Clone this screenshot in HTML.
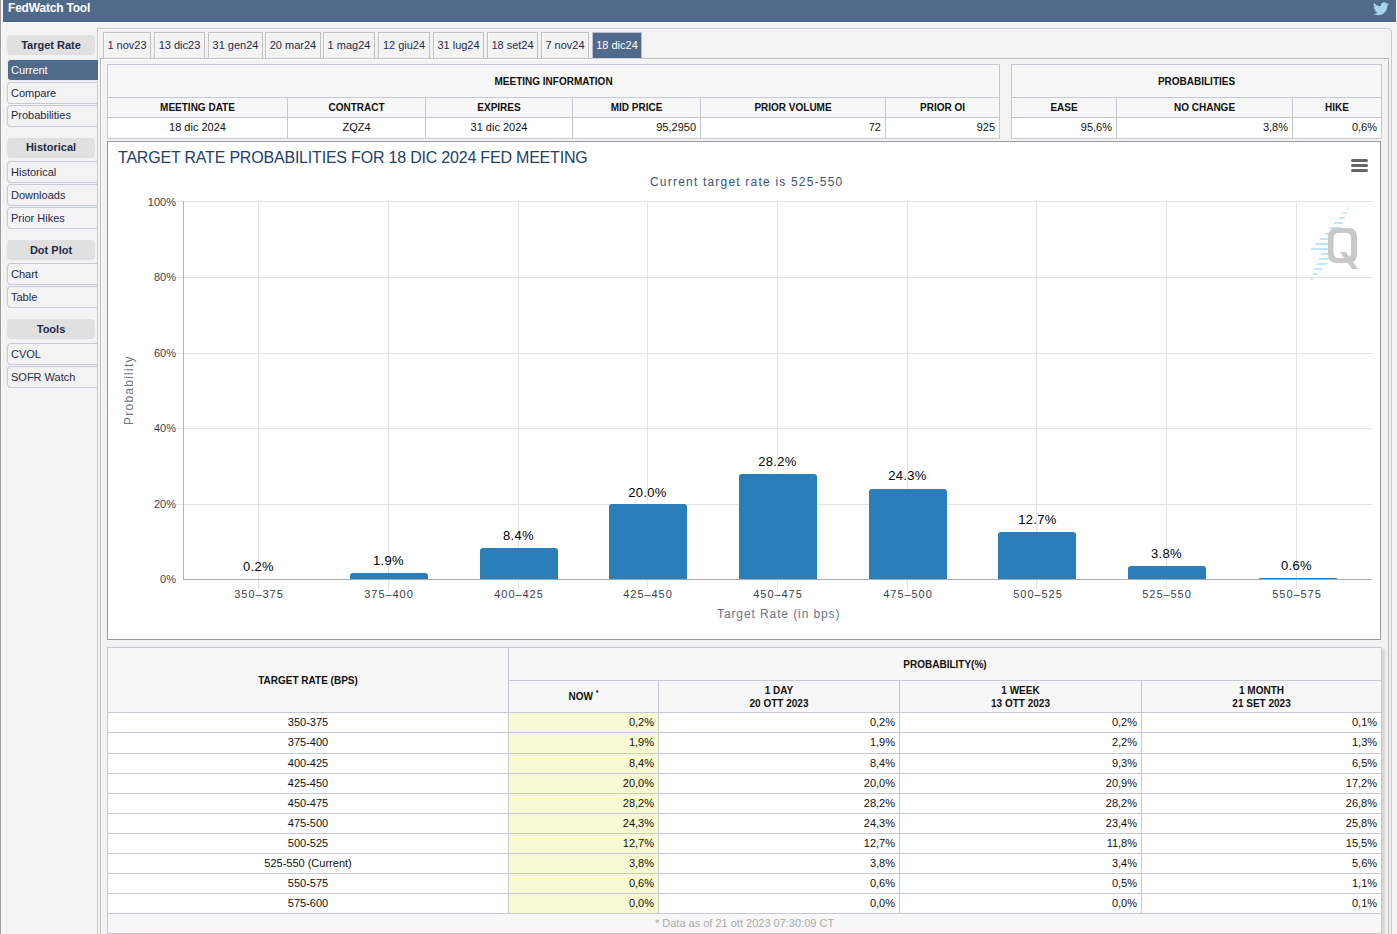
<!DOCTYPE html>
<html><head><meta charset="utf-8">
<style>
*{margin:0;padding:0;box-sizing:border-box}
html,body{width:1397px;height:934px;overflow:hidden;background:#f3f3f3;font-family:"Liberation Sans",sans-serif;color:#1f2a44}
.a{position:absolute}
#lbar{left:0;top:0;width:1px;height:934px;background:#9a9a9a}
#lbar2{left:1px;top:0;width:1px;height:934px;background:#fafafa}
#hdr{left:3px;top:0;width:1393px;height:22px;background:#4f6a8a;border-bottom:1px solid #46617f}
#hdrline{left:3px;top:22px;width:1393px;height:1px;background:#fdfdfd}
#hdr .t{position:absolute;left:5px;top:0px;font-size:12px;font-weight:bold;color:#fff;line-height:16px;letter-spacing:-0.2px}
.sh{position:absolute;left:7px;width:88px;height:20px;background:#e0e0e0;border-radius:4px;font-size:11px;font-weight:bold;text-align:center;line-height:20px;color:#1f2a4a}
.si{position:absolute;left:7px;width:91px;height:22px;background:#f3f3f3;border:1px solid #c5c9d6;border-right:none;border-radius:4px 0 0 4px;font-size:11px;line-height:20px;padding-left:3px;color:#1f2a4a}
.si.act{background:#4f6a8a;border-color:#e6e9ef;color:#fff}
#outer{left:97px;top:28px;width:1295px;height:920px;border:1px solid #c5c9d6;border-radius:1px 4px 0 0;background:#f3f3f3;box-shadow:inset 1px 1px 0 #fafafa}
#content{left:100px;top:58px;width:1289px;height:900px;border:1px solid #b9b9b9;background:#f3f3f3;box-shadow:inset 1px 1px 0 #fff}
.tab{position:absolute;top:32px;height:27px;border:1px solid #c2c2c2;background:#f3f3f3;font-size:11px;line-height:25px;text-align:center;color:#1f2a4a;box-shadow:inset 1px 1px 0 #fbfbfb}
.tab.act{background:#4f6a8a;color:#fff;border-color:#b9bfcf;border-bottom-color:#cfd3dc;box-shadow:none}
table{border-collapse:collapse;table-layout:fixed;position:absolute}
td,th{border:1px solid #c5c9d6;overflow:hidden;white-space:nowrap;color:#111}
th{background:#f7f7f7;font-size:10px;font-weight:bold;line-height:13px}
td{background:#fff;font-size:11px;vertical-align:top;line-height:13px;padding-top:3px}
.r{text-align:right;padding-right:4px}
.c{text-align:center}
#chart{left:107px;top:141px;width:1274px;height:499px;border:1px solid #9a9a9a;background:#fff}
.gl{position:absolute;background:#e3e3e3}
.bar{position:absolute;background:#2a7eb9;border-radius:3px 3px 0 0}
.dl{position:absolute;width:80px;text-align:center;font-size:13px;color:#000;letter-spacing:0.3px}
.xl{position:absolute;width:80px;text-align:center;font-size:11px;color:#3a3f4a;letter-spacing:0.95px;text-indent:1px}
.now{background:#f9f9d2}
.foot{background:#f7f7f7;color:#aaa}
sup{font-size:7px;vertical-align:top;position:relative;top:-4px}
.yl{position:absolute;width:40px;text-align:right;font-size:11px;color:#3a3f4a}
</style></head><body>
<div class="a" id="lbar"></div><div class="a" id="lbar2"></div>
<div class="a" id="hdr"><span class="t">FedWatch Tool</span>
<svg style="position:absolute;left:1370px;top:2px" width="16" height="14" viewBox="0 0 24 20"><path fill="#a8d4f2" d="M24 2.4c-.9.4-1.8.6-2.8.8 1-.6 1.8-1.6 2.2-2.7-1 .6-2 1-3.1 1.2C19.3.7 18 0 16.6 0c-2.7 0-4.9 2.2-4.9 4.9 0 .4 0 .8.1 1.1C7.7 5.8 4.1 3.9 1.7.9c-.4.7-.7 1.6-.7 2.5 0 1.7.9 3.2 2.2 4.1-.8 0-1.6-.2-2.2-.6v.1c0 2.4 1.7 4.4 3.9 4.8-.4.1-.8.2-1.3.2-.3 0-.6 0-.9-.1.6 2 2.4 3.4 4.6 3.4-1.7 1.3-3.8 2.1-6.1 2.1-.4 0-.8 0-1.2-.1 2.2 1.4 4.8 2.2 7.5 2.2 9.1 0 14-7.5 14-14v-.6c1-.7 1.8-1.6 2.5-2.5z"/></svg>
</div>
<div class="a" id="hdrline"></div>

<div class="a" id="outer"></div>
<div class="a" id="content"></div>

<!-- sidebar -->
<div class="sh" style="top:35px">Target Rate</div>
<div class="si" style="top:82px">Compare</div>
<div class="si" style="top:105px;line-height:18px">Probabilities</div>
<div class="sh" style="top:138px;line-height:18px">Historical</div>
<div class="si" style="top:161px">Historical</div>
<div class="si" style="top:184px">Downloads</div>
<div class="si" style="top:207px">Prior Hikes</div>
<div class="sh" style="top:240px">Dot Plot</div>
<div class="si" style="top:263px">Chart</div>
<div class="si" style="top:286px">Table</div>
<div class="sh" style="top:319px">Tools</div>
<div class="si" style="top:343px">CVOL</div>
<div class="si" style="top:366px">SOFR Watch</div>
<div class="a" style="left:97px;top:30px;width:1px;height:904px;background:#c5c9d6"></div>
<div class="si act" style="top:59px">Current</div>

<!-- tabs -->
<div class="tab" style="left:103px;width:48px">1 nov23</div>
<div class="tab" style="left:154px;width:51px">13 dic23</div>
<div class="tab" style="left:208px;width:55px">31 gen24</div>
<div class="tab" style="left:265px;width:56px">20 mar24</div>
<div class="tab" style="left:323px;width:52px">1 mag24</div>
<div class="tab" style="left:378px;width:52px">12 giu24</div>
<div class="tab" style="left:433px;width:51px">31 lug24</div>
<div class="tab" style="left:487px;width:51px">18 set24</div>
<div class="tab" style="left:541px;width:48px">7 nov24</div>
<div class="tab act" style="left:592px;width:50px">18 dic24</div>

<!-- meeting info -->
<table style="left:107px;top:64px;width:893px">
<colgroup><col style="width:180px"><col style="width:138px"><col style="width:147px"><col style="width:128px"><col style="width:185px"><col style="width:114px"></colgroup>
<tr style="height:33px"><th colspan="6">MEETING INFORMATION</th></tr>
<tr style="height:20px"><th>MEETING DATE</th><th>CONTRACT</th><th>EXPIRES</th><th>MID PRICE</th><th>PRIOR VOLUME</th><th>PRIOR OI</th></tr>
<tr style="height:21px"><td class="c">18 dic 2024</td><td class="c">ZQZ4</td><td class="c">31 dic 2024</td><td class="r">95,2950</td><td class="r">72</td><td class="r">925</td></tr>
</table>
<table style="left:1011px;top:64px;width:371px">
<colgroup><col style="width:105px"><col style="width:176px"><col style="width:89px"></colgroup>
<tr style="height:33px"><th colspan="3">PROBABILITIES</th></tr>
<tr style="height:20px"><th>EASE</th><th>NO CHANGE</th><th>HIKE</th></tr>
<tr style="height:21px"><td class="r">95,6%</td><td class="r">3,8%</td><td class="r">0,6%</td></tr>
</table>

<!-- chart -->
<div class="a" id="chart"></div>
<!-- chart start -->
<div class="a" style="left:118px;top:149px;font-size:16px;color:#233f6b;letter-spacing:-0.2px;white-space:nowrap">TARGET RATE PROBABILITIES FOR 18 DIC 2024 FED MEETING</div>
<div class="a" style="left:650px;top:175px;width:192px;font-size:12px;color:#3a5478;letter-spacing:1.2px;white-space:nowrap">Current target rate is 525-550</div>
<div class="a" style="left:1351px;top:159px;width:17px;height:3px;background:#666;border-radius:1.5px"></div>
<div class="a" style="left:1351px;top:164px;width:17px;height:3px;background:#666;border-radius:1.5px"></div>
<div class="a" style="left:1351px;top:169px;width:17px;height:3px;background:#666;border-radius:1.5px"></div>
<div class="gl" style="left:176px;top:201px;width:1196px;height:1px"></div>
<div class="gl" style="left:176px;top:277px;width:1196px;height:1px"></div>
<div class="gl" style="left:176px;top:353px;width:1196px;height:1px"></div>
<div class="gl" style="left:176px;top:428px;width:1196px;height:1px"></div>
<div class="gl" style="left:176px;top:504px;width:1196px;height:1px"></div>
<div class="gl" style="left:183px;top:201px;width:1px;height:378px;background:#b3b3b3"></div>
<div class="gl" style="left:258px;top:201px;width:1px;height:388px"></div>
<div class="gl" style="left:388px;top:201px;width:1px;height:388px"></div>
<div class="gl" style="left:518px;top:201px;width:1px;height:388px"></div>
<div class="gl" style="left:647px;top:201px;width:1px;height:388px"></div>
<div class="gl" style="left:777px;top:201px;width:1px;height:388px"></div>
<div class="gl" style="left:907px;top:201px;width:1px;height:388px"></div>
<div class="gl" style="left:1036px;top:201px;width:1px;height:388px"></div>
<div class="gl" style="left:1166px;top:201px;width:1px;height:388px"></div>
<div class="gl" style="left:1296px;top:201px;width:1px;height:388px"></div>
<svg class="a" style="left:1300px;top:200px" width="70" height="90" viewBox="1300 200 70 90"><polygon fill="#bde8fb" points="1347.8,207 1349.2,207 1348.2,209 1346.8,209"/><polygon fill="#bde8fb" points="1343.4,212 1347.1,212 1346.1,214 1342.4,214"/><polygon fill="#bde8fb" points="1339.1,217 1345.2,217 1344.2,219 1338.1,219"/><polygon fill="#bde8fb" points="1334.6,222 1342.9,222 1341.9,224 1333.6,224"/><polygon fill="#bde8fb" points="1329.9,227 1341.0,227 1340.0,229 1328.9,229"/><polygon fill="#bde8fb" points="1325.1,233 1333.0,233 1332.0,235 1324.1,235"/><polygon fill="#bde8fb" points="1320.3,238 1331.0,238 1330.0,240 1319.3,240"/><polygon fill="#bde8fb" points="1316.0,243 1331.0,243 1330.0,245 1315.0,245"/><polygon fill="#bde8fb" points="1311.1,248 1331.0,248 1330.0,250 1310.1,250"/><polygon fill="#bde8fb" points="1321.3,253 1331.0,253 1330.0,255 1320.3,255"/><polygon fill="#bde8fb" points="1319.3,258 1331.0,258 1330.0,260 1318.3,260"/><polygon fill="#bde8fb" points="1317.2,263 1327.5,263 1326.5,265 1316.2,265"/><polygon fill="#bde8fb" points="1315.0,268 1322.7,268 1321.7,270 1314.0,270"/><polygon fill="#bde8fb" points="1313.0,273 1318.2,273 1317.2,275 1312.0,275"/><polygon fill="#bde8fb" points="1311.1,278 1313.5,278 1312.5,280 1310.1,280"/><path fill="#c8c8c8" fill-rule="evenodd" d="M1337 228h11q9 0 9 9v17q0 9-9 9h-11q-9 0-9-9v-17q0-9 9-9zM1339 233q-5.5 0-5.5 5.5v14q0 5.5 5.5 5.5h7q5 0 5-5.5v-14q0-5.5-5-5.5z"/><polygon fill="#c8c8c8" points="1340,252 1346,252 1358,269 1352,269"/></svg>
<div class="gl" style="left:183px;top:579px;width:1189px;height:1px;background:#ababab"></div>
<div class="dl" style="left:218.5px;top:559.2px">0.2%</div>
<div class="xl" style="left:218.5px;top:588px">350–375</div>
<div class="bar" style="left:350px;top:573px;width:78px;height:6px"></div>
<div class="dl" style="left:348.5px;top:552.8px">1.9%</div>
<div class="xl" style="left:348.5px;top:588px">375–400</div>
<div class="bar" style="left:480px;top:548px;width:78px;height:31px"></div>
<div class="dl" style="left:478.5px;top:528.3px">8.4%</div>
<div class="xl" style="left:478.5px;top:588px">400–425</div>
<div class="bar" style="left:609px;top:504px;width:78px;height:75px"></div>
<div class="dl" style="left:607.5px;top:484.6px">20.0%</div>
<div class="xl" style="left:607.5px;top:588px">425–450</div>
<div class="bar" style="left:739px;top:474px;width:78px;height:105px"></div>
<div class="dl" style="left:737.5px;top:453.7px">28.2%</div>
<div class="xl" style="left:737.5px;top:588px">450–475</div>
<div class="bar" style="left:869px;top:489px;width:78px;height:90px"></div>
<div class="dl" style="left:867.5px;top:468.4px">24.3%</div>
<div class="xl" style="left:867.5px;top:588px">475–500</div>
<div class="bar" style="left:998px;top:532px;width:78px;height:47px"></div>
<div class="dl" style="left:997.5px;top:512.1px">12.7%</div>
<div class="xl" style="left:997.5px;top:588px">500–525</div>
<div class="bar" style="left:1128px;top:566px;width:78px;height:13px"></div>
<div class="dl" style="left:1126.5px;top:545.7px">3.8%</div>
<div class="xl" style="left:1126.5px;top:588px">525–550</div>
<div class="bar" style="left:1259px;top:578px;width:78px;height:1px"></div>
<div class="dl" style="left:1256.5px;top:557.7px">0.6%</div>
<div class="xl" style="left:1256.5px;top:588px">550–575</div>
<div class="yl" style="left:136px;top:196px">100%</div>
<div class="yl" style="left:136px;top:271px">80%</div>
<div class="yl" style="left:136px;top:347px">60%</div>
<div class="yl" style="left:136px;top:422px">40%</div>
<div class="yl" style="left:136px;top:498px">20%</div>
<div class="yl" style="left:136px;top:573px">0%</div>
<div class="a" style="left:717px;top:607px;font-size:12px;color:#6b7585;letter-spacing:0.9px;white-space:nowrap">Target Rate (in bps)</div>
<div class="a" style="left:97px;top:384px;width:66px;font-size:12px;color:#6b7585;letter-spacing:1.25px;white-space:nowrap;transform:rotate(-90deg);transform-origin:33px 8px">Probability</div>
<!-- chart end -->
<table id="bt" style="left:107px;top:647px;width:1274px;box-shadow:3px 2px 3px rgba(0,0,0,0.13)">
<colgroup><col style="width:401px"><col style="width:150px"><col style="width:241px"><col style="width:242px"><col style="width:240px"></colgroup>
<tr style="height:33px"><th rowspan="2">TARGET RATE (BPS)</th><th colspan="4">PROBABILITY(%)</th></tr>
<tr style="height:32px"><th>NOW <sup>*</sup></th><th>1 DAY<br>20 OTT 2023</th><th>1 WEEK<br>13 OTT 2023</th><th>1 MONTH<br>21 SET 2023</th></tr>
<tr style="height:20px"><td class="c">350-375</td><td class="r now">0,2%</td><td class="r">0,2%</td><td class="r">0,2%</td><td class="r">0,1%</td></tr>
<tr style="height:21px"><td class="c">375-400</td><td class="r now">1,9%</td><td class="r">1,9%</td><td class="r">2,2%</td><td class="r">1,3%</td></tr>
<tr style="height:20px"><td class="c">400-425</td><td class="r now">8,4%</td><td class="r">8,4%</td><td class="r">9,3%</td><td class="r">6,5%</td></tr>
<tr style="height:20px"><td class="c">425-450</td><td class="r now">20,0%</td><td class="r">20,0%</td><td class="r">20,9%</td><td class="r">17,2%</td></tr>
<tr style="height:20px"><td class="c">450-475</td><td class="r now">28,2%</td><td class="r">28,2%</td><td class="r">28,2%</td><td class="r">26,8%</td></tr>
<tr style="height:20px"><td class="c">475-500</td><td class="r now">24,3%</td><td class="r">24,3%</td><td class="r">23,4%</td><td class="r">25,8%</td></tr>
<tr style="height:20px"><td class="c">500-525</td><td class="r now">12,7%</td><td class="r">12,7%</td><td class="r">11,8%</td><td class="r">15,5%</td></tr>
<tr style="height:20px"><td class="c">525-550 (Current)</td><td class="r now">3,8%</td><td class="r">3,8%</td><td class="r">3,4%</td><td class="r">5,6%</td></tr>
<tr style="height:20px"><td class="c">550-575</td><td class="r now">0,6%</td><td class="r">0,6%</td><td class="r">0,5%</td><td class="r">1,1%</td></tr>
<tr style="height:20px"><td class="c">575-600</td><td class="r now">0,0%</td><td class="r">0,0%</td><td class="r">0,0%</td><td class="r">0,1%</td></tr>
<tr style="height:20px"><td colspan="5" class="c foot">* Data as of 21 ott 2023 07:30:09 CT</td></tr>
</table>
</body></html>
